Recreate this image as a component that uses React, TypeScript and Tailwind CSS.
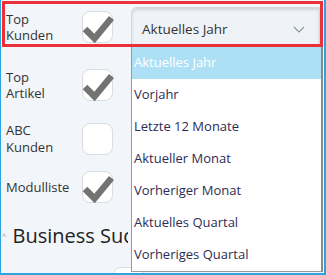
import React from 'react';

const OPTIONS = [
  'Aktuelles Jahr',
  'Vorjahr',
  'Letzte 12 Monate',
  'Aktueller Monat',
  'Vorheriger Monat',
  'Aktuelles Quartal',
  'Vorheriges Quartal',
];

function Check({ checked }: { checked: boolean }) {
  return (
    <div className="relative h-[32px] w-[31px] shrink-0 rounded-[8px] border border-[#d9dde2] bg-white">
      {checked && (
        <svg className="absolute -left-[1px] -top-[1px]" width="33" height="34" viewBox="0 0 33 34">
          <path d="M3 18 L12.5 27.5 L29.5 7" fill="none" stroke="#737373" strokeWidth="6.5" />
        </svg>
      )}
    </div>
  );
}

function Row({
  label,
  checked,
  className,
  children,
}: {
  label: React.ReactNode;
  checked: boolean;
  className: string;
  children?: React.ReactNode;
}) {
  return (
    <div className={`flex items-center ${className}`}>
      <div className="w-[81px] shrink-0 pl-[5px] text-[13px] leading-[16.5px] text-[#333]">{label}</div>
      <Check checked={checked} />
      {children}
    </div>
  );
}

export default function App() {
  return (
    <div
      className="relative h-[275px] w-[326px] overflow-hidden border-b-2 border-l border-r-2 border-[#2ba4e0] bg-[#f2f5f9]"
      style={{ fontFamily: '"Open Sans", "Noto Sans", sans-serif' }}
    >
      <div className="flex flex-col">
        <Row
          className="mt-[11px] h-[32px]"
          checked
          label={
            <>
              Top
              <br />
              Kunden
            </>
          }
        >
          <div className="ml-[18px] flex h-[41px] w-[189px] shrink-0 items-center justify-between rounded-tl-[6px] border border-[#d3d8de] bg-[#eff2f6] pl-[10px] pr-[14px] pt-[5px] text-[13.5px] text-[#333] shadow-[inset_0_2px_3px_rgba(0,0,0,0.12)]">
            <span>Aktuelles Jahr</span>
            <svg width="12" height="7" viewBox="0 0 12 7">
              <path d="M1 1 L6 6 L11 1" fill="none" stroke="#8c96a3" strokeWidth="1.2" />
            </svg>
          </div>
        </Row>
        <Row
          className="mt-[26px] h-[32px]"
          checked
          label={
            <>
              Top
              <br />
              Artikel
            </>
          }
        />
        <Row
          className="mt-[22px] h-[31px]"
          checked={false}
          label={
            <>
              ABC
              <br />
              Kunden
            </>
          }
        />
        <Row className="mt-[17px] h-[32px]" checked label="Modulliste" />
        <div className="mt-[20px] flex items-center">
          <span className="ml-[1px] text-[8px] leading-none text-[#999]">^</span>
          {/* heading runs on behind the open menu */}
          <div className="ml-[6px] w-[115px] overflow-hidden">
            <span className="whitespace-nowrap text-[20px] font-normal leading-[26px] text-[#222]">
              Business Suche
            </span>
          </div>
        </div>
        <div className="ml-[112px] mt-[18px] h-[20px] w-[31px] rounded-[8px] border border-[#d9dde2] bg-white" />
      </div>

      {/* highlight annotation */}
      <div className="pointer-events-none absolute left-[1px] top-[1px] h-[46px] w-[321px] border-[3px] border-[#ec3038]" />

      {/* open select menu */}
      <ul className="absolute left-[130px] top-[47px] w-[192px] border-b border-l border-r-2 border-[#9a9a9a] border-r-[#8a8a8a] bg-white text-[13px]">
        {OPTIONS.map((o, i) => (
          <li
            key={o}
            className={`flex h-[32px] items-center pl-[2px] ${
              i === 0 ? 'bg-[#aee0f5] text-white' : 'text-[#2e2d55]'
            }`}
          >
            {o}
          </li>
        ))}
      </ul>
    </div>
  );
}
